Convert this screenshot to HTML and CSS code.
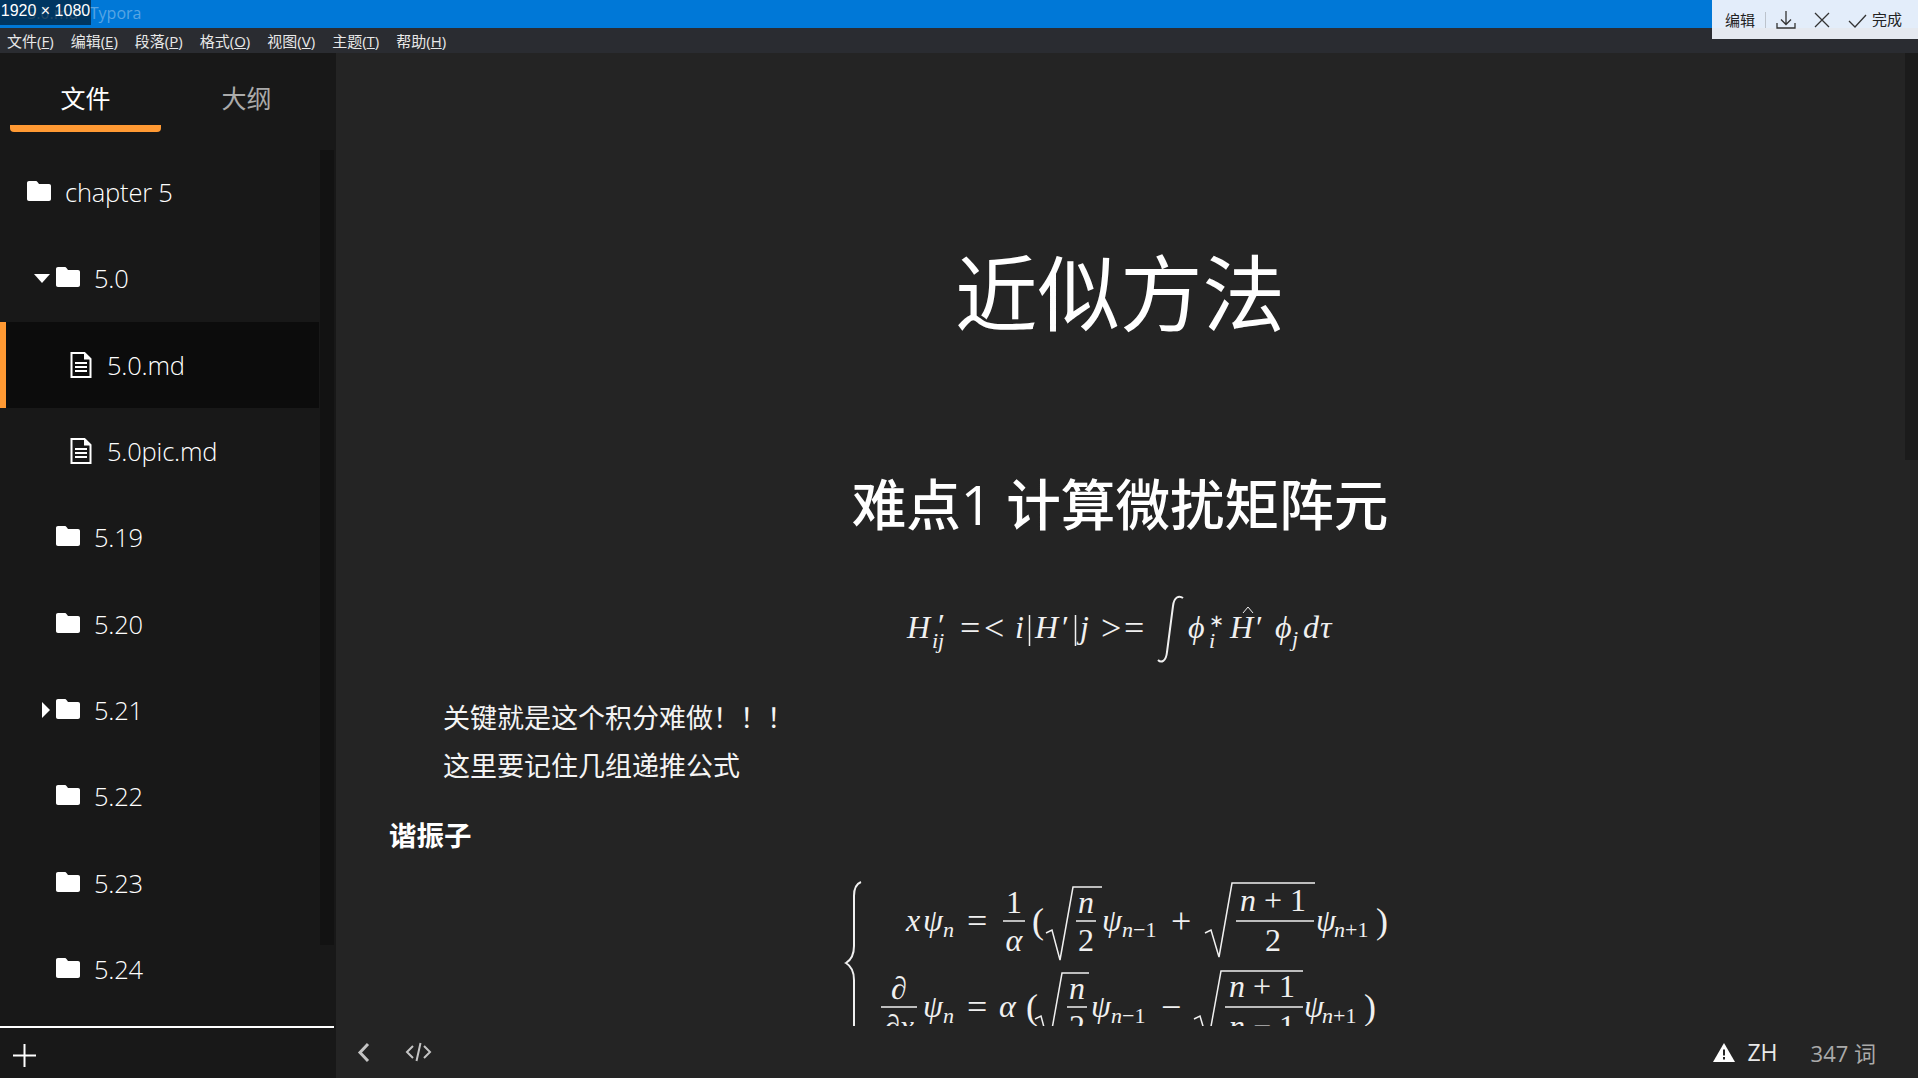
FILE: index.html
```html
<!DOCTYPE html>
<html lang="zh-CN">
<head>
  <meta charset="UTF-8" />
  <title>5.0.md - Typora</title>
  <link rel="stylesheet" href="styles.css">
</head>
<body>
  <svg class="defs" width="0" height="0">
    <symbol id="folder" viewBox="0 0 24 20">
      <path d="M2 0h6.500c1 0 1.600.4 2.200 1.200L12 3h10c1.200 0 2 .8 2 2v13c0 1.200-.8 2-2 2H2c-1.200 0-2-.8-2-2V2C0 .8.800 0 2 0z" fill="#fff"/>
    </symbol>
    <symbol id="file" viewBox="0 0 22 26">
      <path d="M1.500 1h13l6 6v18h-19z" fill="none" stroke="#fff" stroke-width="2"/>
      <path d="M14 1v6.500h6.500z" fill="#fff"/>
      <path d="M5 11h12M5 15h12M5 19h12" stroke="#fff" stroke-width="2"/>
    </symbol>
  </svg>

  <div class="titlebar">
    <span class="title">5.0.md - Typora</span>
  </div>
  <div class="size-tag">1920 × 1080</div>

  <div class="snip-bar">
    <span class="snip-edit">编辑</span>
    <i class="snip-sep"></i>
    <svg class="snip-icon" width="20" height="20" viewBox="0 0 20 20"><path d="M10 1v13M5 9.500l5 5 5-5M1 13v5h18v-5" fill="none" stroke="#333" stroke-width="1.300"/></svg>
    <svg class="snip-icon" width="16" height="16" viewBox="0 0 16 16"><path d="M1 1l14 14M15 1L1 15" fill="none" stroke="#333" stroke-width="1.300"/></svg>
    <svg class="snip-check" width="19" height="14" viewBox="0 0 19 14"><path d="M1 7l6 6L18 1" fill="none" stroke="#333" stroke-width="1.300"/></svg>
    <span class="snip-done">完成</span>
  </div>

  <div class="menubar">
    <span>文件(<u>F</u>)</span>
    <span>编辑(<u>E</u>)</span>
    <span>段落(<u>P</u>)</span>
    <span>格式(<u>O</u>)</span>
    <span>视图(<u>V</u>)</span>
    <span>主题(<u>T</u>)</span>
    <span>帮助(<u>H</u>)</span>
  </div>

  <div class="app">
    <aside class="sidebar">
      <div class="tabs">
        <div class="tab active">文件</div>
        <div class="tab">大纲</div>
      </div>
      <div class="tree-wrap">
        <ul class="tree">
          <li class="row lvl0"><svg class="ico-folder"><use href="#folder"/></svg>chapter 5</li>
          <li class="row lvl1"><span class="caret-down"></span><svg class="ico-folder"><use href="#folder"/></svg>5.0</li>
          <li class="row lvl2 selected"><svg class="ico-file"><use href="#file"/></svg>5.0.md</li>
          <li class="row lvl2"><svg class="ico-file"><use href="#file"/></svg>5.0pic.md</li>
          <li class="row lvl1"><svg class="ico-folder"><use href="#folder"/></svg>5.19</li>
          <li class="row lvl1"><svg class="ico-folder"><use href="#folder"/></svg>5.20</li>
          <li class="row lvl1"><span class="caret-right"></span><svg class="ico-folder"><use href="#folder"/></svg>5.21</li>
          <li class="row lvl1"><svg class="ico-folder"><use href="#folder"/></svg>5.22</li>
          <li class="row lvl1"><svg class="ico-folder"><use href="#folder"/></svg>5.23</li>
          <li class="row lvl1"><svg class="ico-folder"><use href="#folder"/></svg>5.24</li>
        </ul>
        <div class="tree-scroll"></div>
      </div>
      <div class="side-foot">
        <svg width="23" height="23" viewBox="0 0 23 23"><path d="M11.500 0v23M0 11.500h23" stroke="#fff" stroke-width="2"/></svg>
      </div>
    </aside>

    <main class="editor">
      <div class="doc">
        <h1>近似方法</h1>
        <h2>难点1 计算微扰矩阵元</h2>

        <svg class="formula f1" width="440" height="80" viewBox="0 0 440 80">
          <text class="mi" x="7" y="48">H</text>
          <text class="ms" x="32" y="58">ij</text>
          <text class="mn" x="38" y="46">′</text>
          <text class="op" x="60" y="50">=</text>
          <text class="op" x="84" y="50">&lt;</text>
          <text class="mi" x="115" y="48">i</text>
          <path d="M129.500 25v31" class="line"/>
          <text class="mi" x="135" y="48">H</text>
          <text class="mn" x="162" y="48">′</text>
          <path d="M175.500 25v31" class="line"/>
          <text class="mi" x="180" y="48">j</text>
          <text class="op" x="201" y="50">&gt;</text>
          <text class="op" x="224" y="50">=</text>
          <path d="M258 70c3 3 8 2 9-8l6-46c1-9 6-11 10-8" class="brace"/>
          <text class="mi" x="288" y="48">ϕ</text>
          <text class="ms" x="309" y="58">i</text>
          <text class="star" x="309" y="37">∗</text>
          <text class="mi" x="330" y="48">H</text>
          <path d="M343 23l5-6 5 6" class="thin"/>
          <text class="mn" x="356" y="48">′</text>
          <text class="mi" x="375" y="48">ϕ</text>
          <text class="ms" x="392" y="56">j</text>
          <text class="mi" x="403" y="48">d</text>
          <text class="mi" x="420" y="48">τ</text>
        </svg>

        <div class="para">
          <p>关键就是这个积分难做！！！</p>
          <p>这里要记住几组递推公式</p>
        </div>
        <h4>谐振子</h4>

        <svg class="formula f2" width="560" height="190" viewBox="0 0 560 190">
          <path d="M21 13c-5 2-7 6-7 14v50c0 8-3 14-8 17 5 3 8 9 8 17v50" class="brace"/>

          <text class="mi" x="66" y="62">x</text>
          <text class="mi" x="83" y="62">ψ</text>
          <text class="ms" x="103" y="68">n</text>
          <text class="op" x="127" y="64">=</text>
          <text class="mn mid" x="174" y="44">1</text>
          <path d="M163 52h22" class="line"/>
          <text class="mi mid" x="174" y="82">α</text>
          <text class="op" x="192" y="64">(</text>
          <path d="M206 64l6-3 8 30 13-73h29" class="line"/>
          <text class="mi mid" x="246" y="44">n</text>
          <path d="M236 52h20" class="line"/>
          <text class="mn mid" x="246" y="82">2</text>
          <text class="mi" x="262" y="62">ψ</text>
          <text class="ms" x="282" y="68">n<tspan class="up">−1</tspan></text>
          <text class="op" x="331" y="64">+</text>
          <path d="M365 64l6-3 8 27 13-74h83" class="line"/>
          <text class="mi mid" x="433" y="42">n <tspan class="up">+ 1</tspan></text>
          <path d="M396 52h78" class="line"/>
          <text class="mn mid" x="433" y="82">2</text>
          <text class="mi" x="476" y="62">ψ</text>
          <text class="ms" x="494" y="68">n<tspan class="up">+1</tspan></text>
          <text class="op" x="536" y="64">)</text>

          <text class="mn mid" x="59" y="130">∂</text>
          <path d="M41 138h36" class="line"/>
          <text class="mi mid" x="59" y="168">∂x</text>
          <text class="mi" x="83" y="148">ψ</text>
          <text class="ms" x="103" y="154">n</text>
          <text class="op" x="127" y="150">=</text>
          <text class="mi" x="159" y="148">α</text>
          <text class="op" x="186" y="150">(</text>
          <path d="M195 150l6-3 8 30 13-73h27" class="line"/>
          <text class="mi mid" x="237" y="130">n</text>
          <path d="M227 138h20" class="line"/>
          <text class="mn mid" x="237" y="168">2</text>
          <text class="mi" x="251" y="148">ψ</text>
          <text class="ms" x="271" y="154">n<tspan class="up">−1</tspan></text>
          <text class="op" x="321" y="150">−</text>
          <path d="M354 150l6-3 8 27 13-72h82" class="line"/>
          <text class="mi mid" x="422" y="128">n <tspan class="up">+ 1</tspan></text>
          <path d="M385 138h78" class="line"/>
          <text class="mi mid" x="422" y="168">n <tspan class="up">− 1</tspan></text>
          <text class="mi" x="464" y="148">ψ</text>
          <text class="ms" x="482" y="154">n<tspan class="up">+1</tspan></text>
          <text class="op" x="524" y="150">)</text>
        </svg>
      </div>
      <div class="doc-scroll"></div>

      <div class="statusbar">
        <svg class="st-back" width="13" height="21" viewBox="0 0 13 21"><path d="M11 2L3 10.500l8 8.500" fill="none" stroke="#c4c4c4" stroke-width="3"/></svg>
        <svg class="st-code" width="27" height="20" viewBox="0 0 27 20"><path d="M8 4L2 10l6 6M19 4l6 6-6 6M15.500 1l-4 18" fill="none" stroke="#c4c4c4" stroke-width="2"/></svg>
        <span class="st-fill"></span>
        <svg class="st-warn" width="22" height="19" viewBox="0 0 22 19"><path d="M11 0l11 19H0z" fill="#fff"/><path d="M11 6.500v6M11 14v2.500" stroke="#242424" stroke-width="2"/></svg>
        <span class="st-lang">ZH</span>
        <span class="st-count">347 词</span>
      </div>
    </main>
  </div>
</body>
</html>
```

FILE: styles.css
```css
* {
  box-sizing: border-box;
}

html, body {
  margin: 0;
  height: 100%;
  overflow: hidden;
}

body {
  display: flex;
  flex-direction: column;
  background: #242424;
  color: #fff;
  font-family: "Open Sans", "Noto Sans CJK SC", sans-serif;
}

.defs {
  position: absolute;
}

/* window chrome */
.titlebar {
  height: 28px;
  flex: none;
  background: #0078d7;
  padding-left: 27px;
  line-height: 27px;
  font-size: 16px;
}

.title {
  color: rgba(255, 255, 255, 0.35);
  word-spacing: -1px;
}

.size-tag {
  position: absolute;
  left: 0;
  top: 0;
  width: 91px;
  height: 25px;
  background: rgba(0, 0, 0, 0.55);
  color: #fff;
  font: 16px/21px "Liberation Sans", sans-serif;
  text-align: center;
  white-space: nowrap;
}

.snip-bar {
  position: absolute;
  right: 0;
  top: 0;
  width: 206px;
  height: 39px;
  display: flex;
  align-items: center;
  padding-left: 13px;
  background: linear-gradient(#e3edfa 28px, #e5e9f0 28px);
  color: #222;
  font-size: 15px;
}

.snip-edit {
  margin-top: -1px;
}

.snip-sep {
  width: 1px;
  height: 16px;
  margin: 0 10px 0 10px;
  background: #bcc3cc;
}

.snip-icon {
  margin-right: 18px;
}

.snip-check {
  margin-right: 5px;
  margin-top: 3px;
}

.snip-done {
  font-size: 15px;
  margin-top: -3px;
}

.menubar {
  height: 25px;
  flex: none;
  display: flex;
  gap: 17px;
  padding: 0 0 1px 7px;
  align-items: center;
  background: #2a2c31;
  color: #e8e8e8;
  font-size: 15px;
}

/* main layout */
.app {
  flex: 1;
  min-height: 0;
  display: flex;
}

.sidebar {
  width: 336px;
  flex: none;
  display: flex;
  flex-direction: column;
  background: #181818;
}

.tabs {
  height: 96px;
  flex: none;
  display: flex;
  padding-left: 10px;
}

.tab {
  width: 151px;
  height: 79px;
  margin-right: 10px;
  text-align: center;
  font-size: 25px;
  line-height: 91px;
  color: #aaa;
}

.tab.active {
  color: #fff;
  border-bottom: 7px solid #ff9933;
  border-radius: 0 0 4px 4px;
}

.tree-wrap {
  position: relative;
  flex: 1;
  min-height: 0;
  overflow: hidden;
}

.tree {
  list-style: none;
  margin: 0;
  padding: 0;
}

.row {
  height: 86.3px;
  width: 319px;
  display: flex;
  align-items: center;
  font-size: 25.500px;
  font-weight: 300;
  letter-spacing: -0.2px;
}

.lvl0 {
  padding-left: 27px;
}

.lvl1 {
  padding-left: 56px;
  position: relative;
}

.lvl2 {
  padding-left: 70px;
}

.selected {
  background: #0c0c0c;
  border-left: 6px solid #ff9933;
  padding-left: 64px;
}

.ico-folder {
  width: 24px;
  height: 20px;
  margin-right: 14px;
  margin-top: -2px;
  flex: none;
}

.ico-file {
  width: 22px;
  height: 26px;
  margin-right: 15px;
  flex: none;
}

.caret-down {
  position: absolute;
  left: 34px;
  top: 39px;
  border-top: 9px solid #fff;
  border-left: 8px solid transparent;
  border-right: 8px solid transparent;
}

.caret-right {
  position: absolute;
  left: 42px;
  top: 35px;
  border-left: 8px solid #fff;
  border-top: 8px solid transparent;
  border-bottom: 8px solid transparent;
}

.tree-scroll {
  position: absolute;
  left: 320px;
  top: 1px;
  width: 14px;
  height: 795px;
  background: #121212;
}

.side-foot {
  height: 52px;
  flex: none;
  width: 334px;
  border-top: 2px solid #fff;
  padding: 16px 0 0 13px;
  background: #181818;
}

.editor {
  position: relative;
  flex: 1;
  min-width: 0;
  display: flex;
  flex-direction: column;
}

.doc {
  flex: 1;
  min-height: 0;
  overflow: hidden;
  padding: 185px 16px 0 53px;
}

.doc h1 {
  margin: 0 0 119px;
  font-size: 82.500px;
  font-weight: 400;
  line-height: 110px;
  text-align: center;
  padding-right: 51px;
}

.doc h2 {
  margin: 0 0 49px;
  font-size: 54.600px;
  font-weight: 500;
  line-height: 74px;
  text-align: center;
  padding-right: 51px;
}

.formula {
  display: block;
  overflow: visible;
}

.f1 {
  margin-left: 511px;
}

.f2 {
  margin: 10px 0 0 451px;
}

.formula text {
  fill: #f0f0f0;
  font-family: "Liberation Serif", serif;
  font-size: 32px;
}

.formula .mi {
  font-style: italic;
}

.formula .ms {
  font-style: italic;
  font-size: 22px;
}

.formula .up {
  font-style: normal;
}

.formula .star {
  font-size: 18px;
}

.formula .op {
  font-size: 36px;
}

.formula .mid {
  text-anchor: middle;
}

.formula .line,
.formula .thin,
.formula .brace {
  fill: none;
  stroke: #f0f0f0;
  stroke-width: 1.500;
}

.formula .thin {
  stroke-width: 1;
}

.formula .brace {
  stroke-width: 2;
}

.para {
  margin: 24px 0 23px 54px;
  font-size: 27px;
  line-height: 48px;
  color: #f4f4f4;
}

.para p {
  margin: 0;
}

.doc h4 {
  margin: 0;
  font-size: 27.500px;
  font-weight: 700;
  line-height: 46px;
}

.doc-scroll {
  position: absolute;
  right: 0;
  top: 0;
  width: 13px;
  height: 407px;
  background: #1b1b1b;
}

.statusbar {
  height: 52px;
  flex: none;
  display: flex;
  align-items: center;
  padding: 0 42px 0 21px;
  font-size: 22px;
}

.st-back {
  margin-right: 35px;
}

.st-fill {
  flex: 1;
}

.st-warn {
  margin-right: 12px;
}

.st-lang {
  color: #e8e8e8;
  margin-right: 33px;
  font-size: 23px;
}

.st-count {
  color: #aaa;
}
```
